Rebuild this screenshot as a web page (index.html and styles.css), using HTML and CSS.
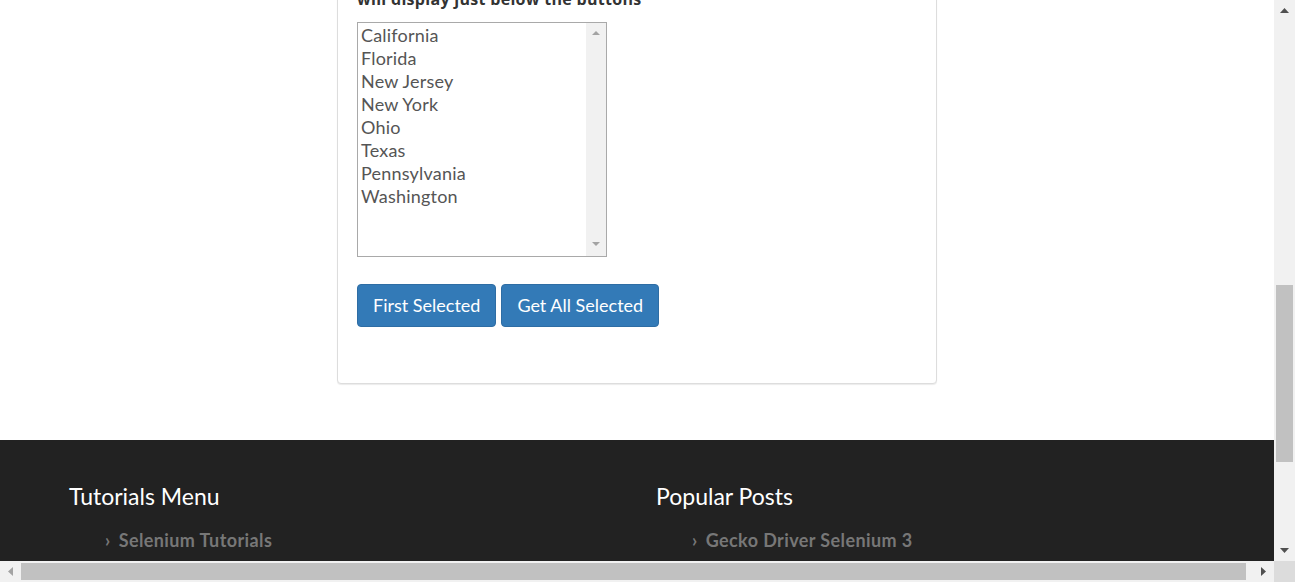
FILE: index.html
```html
<!DOCTYPE html>
<html lang="en">
<head>
<meta charset="utf-8">
<title>Select Dropdown List Demo</title>
<link rel="stylesheet" href="styles.css">
</head>
<body>
<div class="window">
  <div class="viewport" id="viewport">
    <div class="page">
      <header class="site-header">
        <div class="brand">Selenium Easy</div>
        <nav class="nav">
          <a href="#">Input Forms</a>
          <a href="#">Date pickers</a>
          <a href="#">Table</a>
          <a href="#">Progress Bars &amp; Sliders</a>
          <a href="#">Alerts &amp; Modals</a>
          <a href="#">List Box</a>
          <a href="#">Others</a>
        </nav>
      </header>

      <section class="intro">
        <h1 class="intro-title">Select Dropdown List</h1>
        <p class="intro-text">This would be your first example to start with Selenium. Select a value from the list and check the value displayed below.</p>
      </section>

      <main class="main">
        <section class="panel panel-first">
          <div class="panel-heading">Select List Demo</div>
          <div class="panel-body">
            <p class="panel-text">Select a day (select one):</p>
            <select class="single">
              <option>Please select</option>
              <option>Sunday</option>
              <option>Monday</option>
              <option>Tuesday</option>
              <option>Wednesday</option>
              <option>Thursday</option>
              <option>Friday</option>
              <option>Saturday</option>
            </select>
          </div>
        </section>

        <section class="panel">
          <div class="panel-heading">Multi Select List Demo</div>
          <div class="panel-body">
            <p class="panel-text">Select multiple values using Ctrl or Shift.</p>
            <p class="panel-note">Click on the buttons to get the selected values, the values<br>will display just below the buttons</p>
            <div class="listbox">
              <select class="multi" id="multi-select" multiple size="10">
                <option>California</option>
                <option>Florida</option>
                <option>New Jersey</option>
                <option>New York</option>
                <option>Ohio</option>
                <option>Texas</option>
                <option>Pennsylvania</option>
                <option>Washington</option>
              </select>
              <div class="list-scroll">
                <svg class="list-arrow" width="8" height="4" viewBox="0 0 8 4"><polygon points="0,4 4,0 8,4"/></svg>
                <svg class="list-arrow" width="8" height="4" viewBox="0 0 8 4"><polygon points="0,0 8,0 4,4"/></svg>
              </div>
            </div>
            <div class="btn-row">
              <button class="btn" type="button">First Selected</button>
              <button class="btn" type="button">Get All Selected</button>
            </div>
            <p class="result"></p>
          </div>
        </section>
      </main>

      <footer class="site-footer">
        <div class="footer-col">
          <h3 class="footer-title">Tutorials Menu</h3>
          <ul class="footer-list">
            <li><a href="#">Selenium Tutorials</a></li>
            <li><a href="#">TestNG Tutorials</a></li>
            <li><a href="#">Java Tutorials</a></li>
            <li><a href="#">Protractor Tutorials</a></li>
          </ul>
        </div>
        <div class="footer-col">
          <h3 class="footer-title">Popular Posts</h3>
          <ul class="footer-list">
            <li><a href="#">Gecko Driver Selenium 3</a></li>
            <li><a href="#">Selenium Grid Setup</a></li>
            <li><a href="#">TestNG Listeners</a></li>
            <li><a href="#">Page Object Model</a></li>
          </ul>
        </div>
      </footer>
    </div>
  </div>

  <div class="vbar">
    <span class="sb-btn"><svg width="9" height="5" viewBox="0 0 9 5"><polygon class="sb-arrow" points="0,5 4.5,0 9,5"/></svg></span>
    <div class="sb-track sb-track-v">
      <div style="height:264px"></div>
      <div class="sb-thumb sb-thumb-v" style="height:177px"></div>
    </div>
    <span class="sb-btn"><svg width="9" height="5" viewBox="0 0 9 5"><polygon class="sb-arrow" points="0,0 9,0 4.5,5"/></svg></span>
  </div>

  <div class="hbar">
    <span class="sb-btn"><svg width="5" height="9" viewBox="0 0 5 9"><polygon class="sb-arrow sb-arrow-off" points="5,0 5,9 0,4.5"/></svg></span>
    <div class="sb-track sb-track-h">
      <div class="sb-thumb sb-thumb-h" style="width:1225px"></div>
    </div>
    <span class="sb-btn"><svg width="5" height="9" viewBox="0 0 5 9"><polygon class="sb-arrow" points="0,0 5,4.5 0,9"/></svg></span>
  </div>

  <div class="corner"></div>
</div>
<script src="script.js"></script>
</body>
</html>
```

FILE: styles.css
```css
* {
  box-sizing: border-box;
}

html,
body {
  margin: 0;
  padding: 0;
  overflow: hidden;
}

body {
  font-family: "Lato", "Open Sans", sans-serif;
  font-size: 16px;
  line-height: 1.4;
  color: #333;
  background: #fff;
}

/* browser window: viewport + scrollbars */
.window {
  width: 1295px;
  height: 582px;
  display: grid;
  grid-template-columns: 1274px 21px;
  grid-template-rows: 561px 21px;
}

.viewport {
  overflow: hidden;
  background: #fff;
}

.vbar {
  display: flex;
  flex-direction: column;
  background: #f1f1f1;
}

.hbar {
  display: flex;
  background: #f1f1f1;
}

.sb-btn {
  flex: 0 0 21px;
  height: 21px;
  width: 21px;
  display: flex;
  align-items: center;
  justify-content: center;
}

.sb-arrow {
  fill: #505050;
}

.sb-arrow-off {
  fill: #a3a3a3;
}

.sb-track {
  flex: 1;
  display: flex;
}

.sb-track-v {
  flex-direction: column;
}

.sb-thumb {
  background: #c1c1c1;
}

.sb-thumb-v {
  margin: 0 2px;
}

.sb-thumb-h {
  margin: 2px 0;
}

.corner {
  background: #dcdcdc;
}

/* page */
.page {
  width: 1281px;
}

.site-header {
  height: 70px;
  display: flex;
  align-items: center;
  gap: 40px;
  padding: 0 69px;
  border-bottom: 1px solid #e5e5e5;
}

.brand {
  font-size: 24px;
  font-weight: 700;
  color: #337ab7;
}

.nav {
  display: flex;
  gap: 22px;
}

.nav a {
  color: #555;
  text-decoration: none;
  font-size: 15px;
}

.intro {
  height: 232px;
  padding: 40px 337px 0;
}

.intro-title {
  margin: 0 0 16px;
  font-size: 30px;
  font-weight: 400;
}

.intro-text {
  margin: 0;
  line-height: 22px;
}

.main {
  padding: 20px 0 56px 337px;
  display: flex;
  flex-direction: column;
  gap: 20px;
}

.panel {
  width: 600px;
  border: 1px solid #ddd;
  border-radius: 4px;
  background: #fff;
  box-shadow: 0 1px 1px rgba(0, 0, 0, 0.08);
}

.panel-first {
  height: 367px;
}

.panel-heading {
  padding: 10px 15px;
  line-height: 20px;
  background: #f5f5f5;
  border-bottom: 1px solid #ddd;
  border-radius: 3px 3px 0 0;
}

.panel-body {
  padding: 20px 19px;
}

.panel-text {
  margin: 0 0 10px;
  line-height: 22px;
}

.panel-note {
  margin: 0 0 12px;
  line-height: 22px;
  font-family: "Open Sans", "Lato", sans-serif;
  font-weight: 700;
  font-size: 16px;
  letter-spacing: 0.3px;
}

.single {
  width: 250px;
  height: 34px;
  font: 16px "Lato", sans-serif;
}

/* multi select list */
.listbox {
  display: flex;
  width: 250px;
  height: 235px;
  border: 1px solid #a9a9a9;
  background: #fff;
}

.multi {
  flex: 1;
  min-width: 0;
  height: 100%;
  margin: 0;
  padding: 1px 0 0;
  border: 0;
  border-radius: 0;
  background: #fff;
  color: #555;
  font: 18px "Lato", sans-serif;
  letter-spacing: 0.2px;
  outline: none;
  overflow: hidden;
}

.multi option {
  padding: 0 2px 1px 3px;
  line-height: 22.4px;
}

.list-scroll {
  flex: 0 0 20px;
  background: #f1f1f1;
  display: flex;
  flex-direction: column;
  align-items: center;
  justify-content: space-between;
  padding: 8px 0 10px;
}

.list-arrow {
  fill: #a3a3a3;
}

.btn-row {
  display: flex;
  gap: 5px;
  margin-top: 27px;
}

.btn {
  height: 43px;
  padding: 0 15px;
  border: 1px solid #2e6da4;
  border-radius: 4px;
  background: #337ab7;
  color: #fff;
  font: 18px "Lato", sans-serif;
  line-height: 25px;
  cursor: pointer;
}

.result {
  margin: 0;
  min-height: 36px;
}

/* footer */
.site-footer {
  height: 368px;
  background: #222;
  padding: 42px 0 0 69px;
  display: grid;
  grid-template-columns: 587px 587px;
  align-content: start;
}

.footer-title {
  margin: 0;
  font-size: 23px;
  line-height: 28px;
  font-weight: 400;
  color: #fff;
}

.footer-list {
  list-style: none;
  margin: 20px 0 0;
  padding: 0 0 0 36px;
}

.footer-list li {
  font-size: 18px;
  line-height: 21.6px;
  font-weight: 700;
  letter-spacing: 0.4px;
  color: #777;
  margin-bottom: 14px;
}

.footer-list li::before {
  content: "\203A";
  margin-right: 8px;
}

.footer-list a {
  color: #777;
  text-decoration: none;
}
```

FILE: script.js
```js
(function () {
  function place() {
    var vp = document.getElementById('viewport');
    var sel = document.getElementById('multi-select');
    var vr = vp.getBoundingClientRect();
    var r = sel.getBoundingClientRect();
    vp.scrollTop = vp.scrollTop + (r.top - vr.top) - 23;
    vp.scrollLeft = 0;
  }
  place();
  window.addEventListener('load', place);
})();
```
